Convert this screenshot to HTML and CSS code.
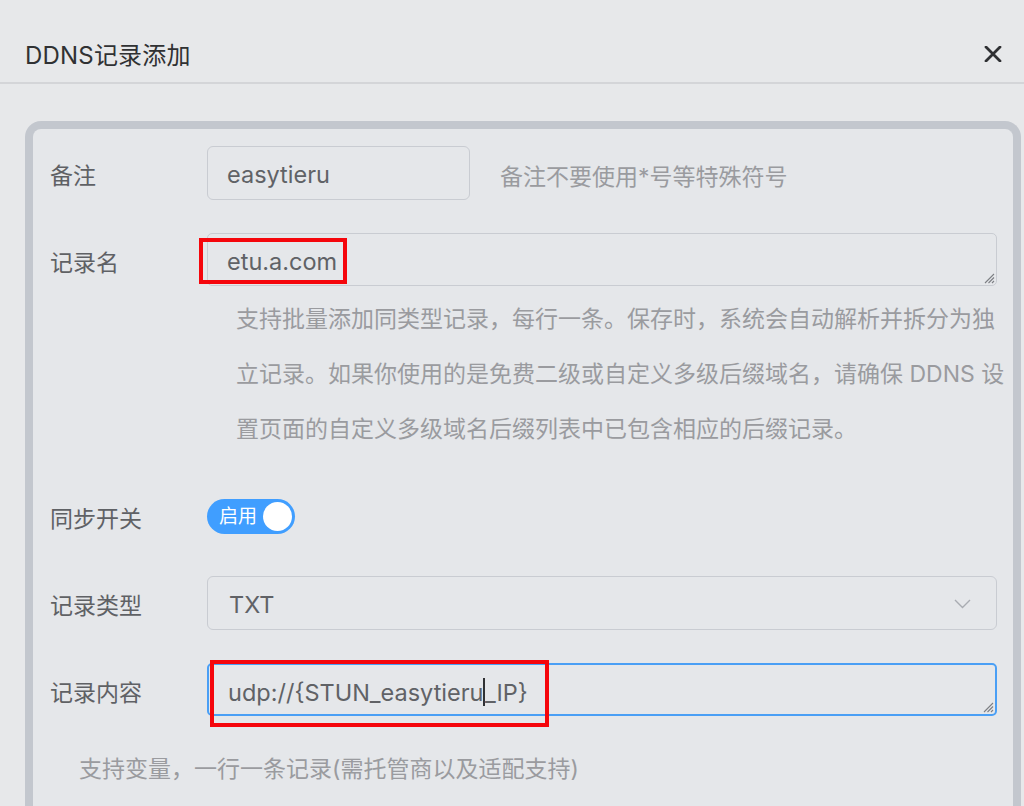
FILE: index.html
```html
<!DOCTYPE html>
<html lang="zh-CN">
<head>
<meta charset="utf-8">
<title>DDNS记录添加</title>
<link rel="stylesheet" href="styles.css">
</head>
<body>
<div class="dialog">
  <div class="header">
    <span class="title">DDNS记录添加</span>
    <svg class="close" width="18" height="16" viewBox="0 0 18 16"><path d="M2 1 L16 15 M16 1 L2 15" stroke="#2f3033" stroke-width="2.8" stroke-linecap="round" fill="none"/></svg>
  </div>
  <div class="card">
    <div class="form-item">
      <div class="label">备注</div>
      <div class="control row">
        <div class="input short">easytieru</div>
        <span class="tip">备注不要使用*号等特殊符号</span>
      </div>
    </div>
    <div class="form-item gap-sm">
      <div class="label">记录名</div>
      <div class="control">
        <div class="input textarea">etu.a.com
          <svg class="grip" width="12" height="12" viewBox="0 0 12 12"><path d="M11 2 L2 11 M11 5.5 L5.5 11 M11 9 L9 11" stroke="#7d7f84" stroke-width="1.1" fill="none"/></svg>
          <span class="mark mark-name"></span>
        </div>
        <p class="help">支持批量添加同类型记录，每行一条。保存时，系统会自动解析并拆分为独立记录。如果你使用的是免费二级或自定义多级后缀域名，请确保 DDNS 设置页面的自定义多级域名后缀列表中已包含相应的后缀记录。</p>
      </div>
    </div>
    <div class="form-item center">
      <div class="label">同步开关</div>
      <div class="control">
        <div class="switch"><span class="switch-text">启用</span><span class="knob"></span></div>
      </div>
    </div>
    <div class="form-item">
      <div class="label">记录类型</div>
      <div class="control">
        <div class="input select"><span>TXT</span>
          <svg width="17" height="10" viewBox="0 0 17 10"><path d="M1 1 L8.5 8.5 L16 1" stroke="#a9acb2" stroke-width="1.4" fill="none"/></svg>
        </div>
      </div>
    </div>
    <div class="form-item last">
      <div class="label">记录内容</div>
      <div class="control">
        <div class="input textarea focused">udp://{STUN_easytieru<span class="caret"></span>_IP}
          <svg class="grip" width="12" height="12" viewBox="0 0 12 12"><path d="M11 2 L2 11 M11 5.5 L5.5 11 M11 9 L9 11" stroke="#7d7f84" stroke-width="1.1" fill="none"/></svg>
          <span class="mark mark-content"></span>
        </div>
      </div>
    </div>
    <p class="help bottom">支持变量，一行一条记录(需托管商以及适配支持)</p>
  </div>
</div>
</body>
</html>
```
FILE: styles.css
```css
html, body {
  margin: 0;
  height: 100%;
  overflow: hidden;
}
body {
  background: #e7e8ea;
  font-family: Inter, "Noto Sans CJK SC", sans-serif;
  color: #606266;
}
.dialog {
  display: flex;
  flex-direction: column;
  height: 100%;
}
.header {
  box-sizing: border-box;
  height: 84px;
  padding: 24px 22px 0 25px;
  display: flex;
  align-items: center;
  justify-content: space-between;
  border-bottom: 2px solid #d4d5d8;
}
.title {
  font-size: 24px;
  color: #303133;
  letter-spacing: 0.2px;
}
.close {
  margin-top: 1px;
}
.card {
  flex: 1;
  margin: 37px 3px 0 25px;
  border: 8px solid #c3c7ce;
  border-bottom: none;
  border-radius: 16px 16px 0 0;
  background: #e5e7ea;
  padding: 17px 16px 0 17px;
}
.form-item {
  display: flex;
  align-items: flex-start;
  margin-bottom: 33px;
}
.form-item.gap-sm {
  margin-bottom: 32px;
}
.form-item.center {
  align-items: center;
}
.form-item.last {
  margin-bottom: 0;
}
.label {
  flex: none;
  box-sizing: border-box;
  width: 157px;
  height: 54px;
  padding-top: 3px;
  line-height: 54px;
  font-size: 23px;
  color: #5f6165;
}
.control {
  flex: 1;
  min-width: 0;
}
.control.row {
  display: flex;
  align-items: center;
}
.input {
  position: relative;
  box-sizing: border-box;
  height: 54px;
  line-height: 50px;
  padding: 3px 19px 0;
  border: 1.5px solid #c9ccd2;
  border-radius: 6px;
  font-size: 23.5px;
  color: #606266;
  background: transparent;
  white-space: nowrap;
}
.input.short {
  width: 263px;
}
.input.textarea {
  height: 53px;
  border-radius: 5px;
}
.input.focused {
  border: 2px solid #4a9ff5;
}
.input.select {
  display: flex;
  align-items: center;
  justify-content: space-between;
  padding: 3px 25px 0 21px;
}
.input.select svg {
  margin-top: -1px;
}
.grip {
  position: absolute;
  right: 1px;
  bottom: 1px;
}
.caret {
  display: inline-block;
  width: 1.5px;
  height: 28px;
  background: #303133;
  vertical-align: -5px;
}
.tip {
  margin-left: 30px;
  padding-top: 3px;
  font-size: 23px;
  color: #9a9b9f;
}
.help {
  margin: 6px 0 0 29px;
  width: 772px;
  font-size: 23px;
  line-height: 55px;
  color: #9a9b9f;
}
.help.bottom {
  margin: 25px 0 0 29px;
  width: auto;
}
.switch {
  box-sizing: border-box;
  width: 88px;
  height: 35px;
  border-radius: 18px;
  background: #409eff;
  display: flex;
  align-items: center;
  justify-content: space-between;
  padding: 0 3px 0 12px;
}
.switch-text {
  font-size: 19px;
  color: #ffffff;
  line-height: 1;
}
.knob {
  width: 29px;
  height: 29px;
  border-radius: 50%;
  background: #ffffff;
}
.mark {
  position: absolute;
  border: 4px solid #f5060c;
  pointer-events: none;
}
.mark-name {
  left: -9px;
  top: 4px;
  width: 140px;
  height: 38px;
}
.mark-content {
  left: 1px;
  top: -5px;
  width: 331px;
  height: 59px;
}
```
